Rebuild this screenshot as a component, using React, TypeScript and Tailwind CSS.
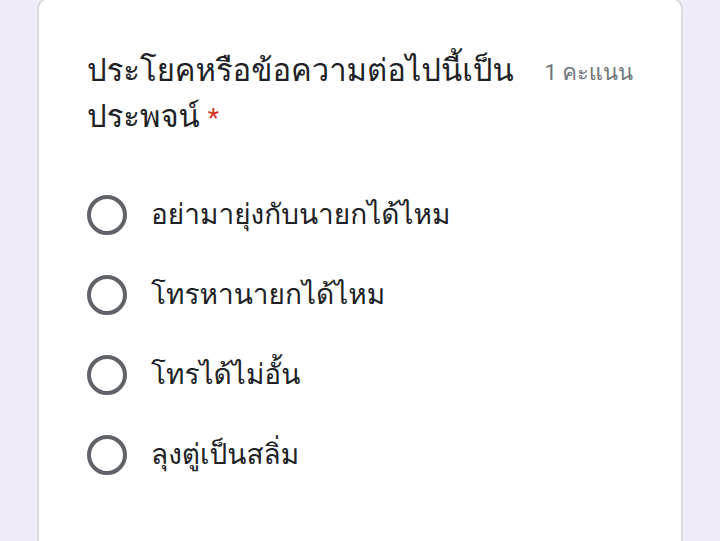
import React, { useState } from 'react';

const options = [
  'อย่ามายุ่งกับนายกได้ไหม',
  'โทรหานายกได้ไหม',
  'โทรได้ไม่อั้น',
  'ลุงตู่เป็นสลิ่ม',
];

export default function App() {
  const [selected, setSelected] = useState<number | null>(null);

  return (
    <div className="h-[541px] w-[720px] overflow-hidden bg-[#f0ebf8] px-[37px] font-['Roboto','Loma',sans-serif]">
      <div className="-mt-[4px] h-[560px] rounded-[14px] border-2 border-[#dadce0] bg-white px-[48px] pt-[50px]">
        <div className="flex items-start justify-between">
          <div className="text-[31px] leading-[46px] text-[#202124]">
            ประโยคหรือข้อความต่อไปนี้เป็น
            <br />
            ประพจน์
            <span className="ml-[8px] text-[26px] text-[#d93025]">*</span>
          </div>
          <div className="whitespace-nowrap pt-[2px] text-[22px] leading-[46px] text-[#70757a]">
            1 คะแนน
          </div>
        </div>

        <div className="mt-[54px] flex flex-col gap-[40px]">
          {options.map((opt, i) => (
            <button
              key={opt}
              type="button"
              onClick={() => setSelected(i)}
              className="flex h-[40px] items-center gap-[24px] text-left"
            >
              <span className="flex h-[40px] w-[40px] shrink-0 items-center justify-center rounded-full border-[4px] border-[#5f6368]">
                {selected === i && <span className="h-[20px] w-[20px] rounded-full bg-[#673ab7]" />}
              </span>
              <span className="text-[28px] text-[#202124]">{opt}</span>
            </button>
          ))}
        </div>
      </div>
    </div>
  );
}
